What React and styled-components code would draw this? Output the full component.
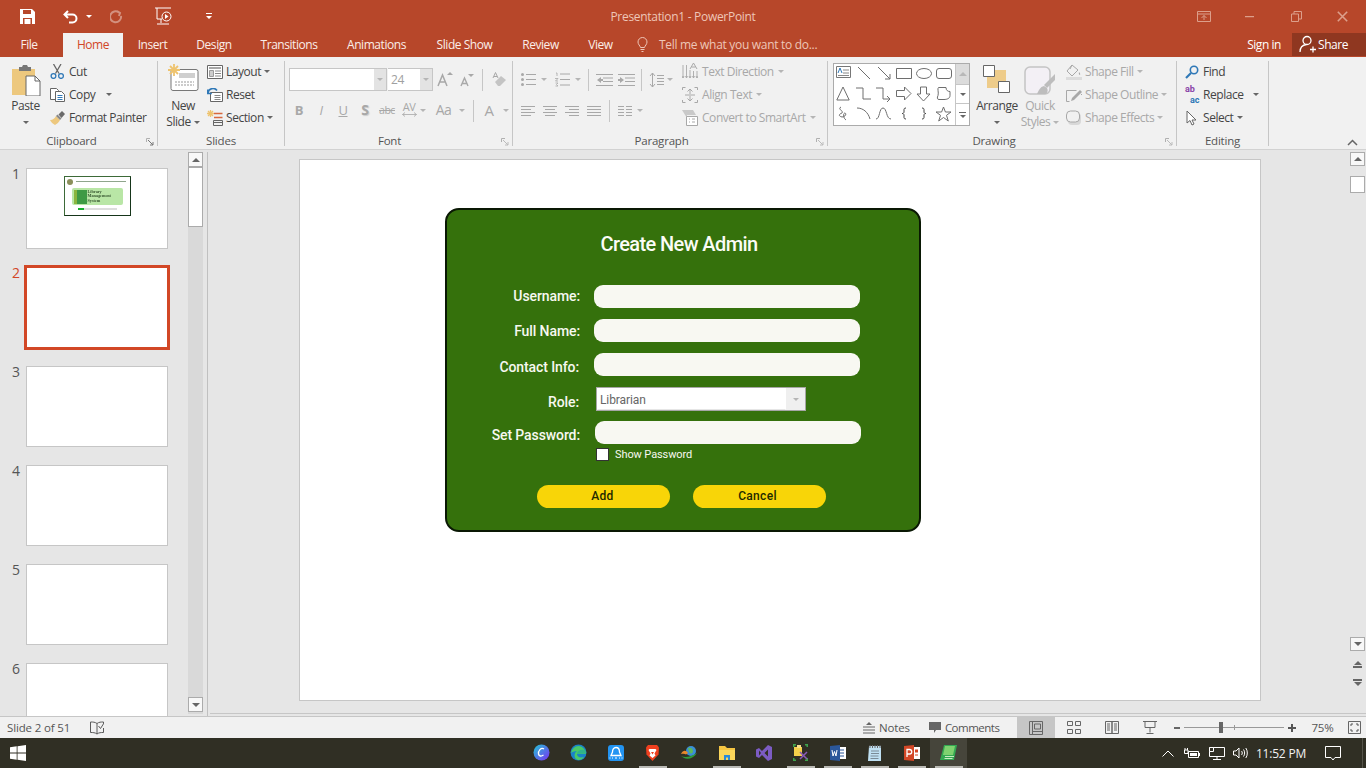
import React from 'react';
import styled, { createGlobalStyle } from 'styled-components';

const Global = createGlobalStyle`
  html, body { margin: 0; padding: 0; background: #e6e6e6; }
  * { box-sizing: border-box; }
  body { font-family: "Open Sans", "Noto Sans", sans-serif; }
`;
const UI = `"Open Sans", "Noto Sans", sans-serif`;
const DIN = `Roboto, "Liberation Sans", sans-serif`;
const GREY = '#a8a8a8';
const DARK = '#444444';
const BLUE = '#2f78b7';
const TAN = '#edc87e';

const Page = styled.div`
  width: 1366px; height: 768px; overflow: hidden;
  display: flex; flex-direction: column;
  font-family: ${UI}; font-size: 12px; letter-spacing: -0.45px; color: ${DARK};
`;

/* ---------- title bar ---------- */
const TitleBar = styled.div`
  height: 33px; background: #b7472a; flex: none;
  display: grid; grid-template-columns: 1fr auto 1fr; align-items: center;
`;
const Qat = styled.div`display: flex; align-items: center; padding-left: 20px;`;
const QatSlot = styled.div`
  width: ${p => p.$w}px; flex: none; display: flex; align-items: center; gap: 8px;
  opacity: ${p => (p.$faded ? 0.4 : 1)};
`;
const TitleText = styled.div`color: #eec6b8; font-size: 12px; padding-bottom: 1px; letter-spacing: -0.3px;`;
const WinControls = styled.div`display: flex; justify-content: flex-end; padding-right: 1px; color: #dc9f8b;`;
const WinBtn = styled.div`width: 46px; height: 30px; display: flex; align-items: center; justify-content: center;`;

/* ---------- tabs ---------- */
const TabBar = styled.div`height: 24px; background: #b7472a; flex: none; display: flex; align-items: stretch;`;
const Tab = styled.div`
  width: ${p => p.$w}px; flex: none; display: flex; align-items: center; justify-content: center;
  color: ${p => (p.$active ? '#d24726' : '#fbeee9')};
  background: ${p => (p.$active ? '#f1f1f1' : 'transparent')};
  font-size: 12px; padding-bottom: 1px;
`;
const TellMe = styled.div`display: flex; align-items: center; gap: 11px; margin-left: 9px; color: #eec6b8; padding-bottom: 1px; font-size: 12px; letter-spacing: -0.3px;`;
const SignIn = styled.div`margin-left: auto; margin-right: 11px; align-self: center; color: #fff; padding-bottom: 1px;`;
const Share = styled.div`
  width: 74px; background: #8f3720; color: #fff; display: flex; align-items: center; gap: 2px;
  padding: 0 0 1px 7px; margin-bottom: 1px;
`;

/* ---------- ribbon ---------- */
const Ribbon = styled.div`
  height: 93px; flex: none; background: #f1f1f1; border-bottom: 1px solid #d2d2d2;
  display: flex; padding-top: 4px; position: relative;
`;
const Group = styled.div`
  width: ${p => p.$w}px; height: 85px; flex: none; border-right: 1px solid #c6c6c6;
  display: flex; flex-direction: column;
`;
const GroupBody = styled.div`height: 71px; flex: none; display: flex; padding-left: ${p => p.$pl}px; gap: ${p => p.$gap || 0}px;`;
const GroupFoot = styled.div`
  height: 16px; flex: none; display: flex; align-items: center; justify-content: center; position: relative;
  font-size: 11.5px; color: #555; letter-spacing: -0.2px; padding-right: ${p => p.$mr || 0}px;
`;
const Launcher = styled.span`
  position: absolute; right: 3px; top: 6px; width: 8px; height: 8px; display: flex;
`;
const Collapse = styled.div`align-self: flex-end; margin-left: auto; margin-right: 8px; margin-bottom: 3px; display: flex;`;

const BigBtn = styled.div`
  width: ${p => p.$w}px; flex: none; display: flex; flex-direction: column; align-items: center;
  color: ${p => (p.$off ? GREY : DARK)}; margin-left: ${p => p.$ml || 0}px;
`;
const BigIcon = styled.div`height: 37px; padding-top: ${p => p.$pt ?? 3}px; display: flex; justify-content: center;`;
const BigLine = styled.div`height: 16px; line-height: 16px; display: flex; align-items: center; gap: 3px; white-space: nowrap;`;
const SmallCol = styled.div`display: flex; flex-direction: column; margin-left: ${p => p.$ml || 0}px;`;
const SmallBtn = styled.div`
  height: 23px; display: flex; align-items: center; gap: ${p => p.$gap ?? 4}px; white-space: nowrap; padding-bottom: 2px;
  color: ${p => (p.$off ? GREY : DARK)};
`;
const IconSlot = styled.span`width: ${p => p.$w || 15}px; flex: none; display: flex; justify-content: center; align-items: center;`;
const Caret = styled.i`
  display: inline-block; width: 0; height: 0; flex: none;
  border-left: 3px solid transparent; border-right: 3px solid transparent;
  border-top: 3px solid ${p => (p.$light ? '#fff' : p.$off ? '#b5b5b5' : '#666')};
  margin-left: ${p => p.$ml || 0}px;
`;
const ToolCol = styled.div`display: flex; flex-direction: column; padding-top: 7px; gap: 8px; width: ${p => (p.$w ? p.$w + 'px' : 'auto')};`;
const ToolRow = styled.div`height: 23px; display: flex; align-items: center;`;
const Tool = styled.div`
  width: ${p => p.$w}px; flex: none; display: flex; align-items: center; justify-content: center;
  flex-direction: ${p => (p.$stack ? 'column' : 'row')};
  margin-left: ${p => p.$ml || 0}px;
  padding-bottom: ${p => (p.$fs ? 2 : 0)}px;
  color: ${GREY}; font-weight: ${p => (p.$b ? 700 : 400)}; font-style: ${p => (p.$i ? 'italic' : 'normal')};
  text-decoration: ${p => (p.$u ? 'underline' : p.$strike ? 'line-through' : 'none')}; font-size: ${p => p.$fs || 12}px;
  line-height: ${p => (p.$stack ? '10px' : 'normal')};
  text-shadow: ${p => (p.$shadow ? '1px 1px 1px #ccc' : 'none')};
`;
const VSep = styled.span`
  width: 1px; height: 22px; background: #c6c6c6; flex: none;
  margin: 0 ${p => p.$m ?? 4}px 0 ${p => p.$ml ?? p.$m ?? 4}px;
`;
const FontName = styled.div`width: 85px; height: 23px; background: #fff; border: 1px solid #c6c6c6; border-right: 0;`;
const FontDrop = styled.div`width: ${p => p.$w}px; height: 23px; background: #e3e3e3; border: 1px solid #c6c6c6; border-left: 0; display: flex; align-items: center; justify-content: center; margin-right: 1px;`;
const FontSize = styled.div`width: 32px; height: 23px; background: #fff; border: 1px solid #c6c6c6; border-right: 0; border-left: 0; color: #a0a0a0; padding-left: 3px; line-height: 21px;`;

const Gallery = styled.div`
  width: 137px; height: 63px; margin-top: 2px; border: 1px solid #ababab; background: #fff;
  display: flex; flex: none;
`;
const GalleryGrid = styled.div`
  width: 122px; display: grid; grid-template-columns: repeat(6, 20px); grid-auto-rows: 20px; align-content: start;
`;
const GalleryCell = styled.div`display: flex; align-items: center; justify-content: center;`;
const GalleryBar = styled.div`width: 14px; border-left: 1px solid #c6c6c6; display: flex; flex-direction: column;`;
const GalleryStep = styled.div`
  height: ${p => p.$h}px; display: flex; align-items: center; justify-content: center; flex-direction: column; gap: 2px;
  background: ${p => (p.$off ? '#dcdcdc' : '#fff')};
  border-bottom: ${p => (p.$last ? 0 : '1px solid #c6c6c6')};
`;
const UpTri = styled.i`width: 0; height: 0; border-left: 4px solid transparent; border-right: 4px solid transparent; border-bottom: 4px solid #b8b8b8;`;

/* ---------- workspace ---------- */
const Work = styled.div`flex: 1; min-height: 0; display: flex; background: #e6e6e6;`;
const Pane = styled.div`width: 188px; flex: none; padding-top: 18px; overflow: hidden; height: 566px;`;
const ThumbRow = styled.div`height: 99px; flex: none; display: flex; padding-left: 12px; gap: 6px;`;
const ThumbNum = styled.div`
  width: 8px; font-size: 14px; line-height: 14px; margin-top: -1px; letter-spacing: 0;
  color: ${p => (p.$sel ? '#d24726' : '#555')};
`;
const Thumb = styled.div`
  width: ${p => (p.$sel ? 146 : 142)}px; height: ${p => (p.$sel ? 85 : 81)}px; flex: none; background: #fff;
  border: ${p => (p.$sel ? '3px solid #d24726' : '1px solid #c6c6c6')};
  margin: ${p => (p.$sel ? '-2px 0 0 -2px' : 0)};
  display: flex; justify-content: center; align-items: flex-start;
`;
const Mini = styled.div`
  width: 67px; height: 40px; margin-top: 7px; border: 1.5px solid #3d6a38; border-right-color: #16351a; border-bottom-color: #16351a;
  background: #fff; display: flex; flex-direction: column; align-items: center; filter: blur(0.35px);
`;
const MiniHead = styled.div`width: 100%; display: flex; align-items: center; gap: 3px; padding: 1px 2px; height: 9px;`;
const MiniSeal = styled.span`width: 6px; height: 6px; border-radius: 50%; background: #8a8f5a;`;
const MiniHeadLine = styled.span`width: 50px; height: 1px; background: #8fa58c;`;
const MiniCard = styled.div`width: 51px; height: 17px; background: #b9e6a6; border-radius: 2px; display: flex; align-items: center; padding-left: 2px; gap: 1px; margin-top: 2px;`;
const MiniBook = styled.span`width: 13px; height: 14px; background: #3f9a45; border-left: 3px solid #8ab53f; flex: none;`;
const MiniTitle = styled.span`font: 700 4.2px/4.6px "Liberation Serif", serif; color: #35552f; letter-spacing: 0;`;
const MiniTrack = styled.div`width: 39px; height: 2px; background: #ddd; margin-top: 3px; display: flex;`;
const MiniFill = styled.span`width: 6px; background: #17b02c;`;

const VScroll = styled.div`
  width: 15px; flex: none; height: 562px; margin-top: 2px; background: #d9d9d9; display: flex; flex-direction: column;
`;
const ScrollBtn = styled.div`
  width: 15px; height: ${p => p.$h || 15}px; flex: none; background: ${p => (p.$thumb ? '#fff' : '#f8f8f8')}; border: 1px solid #ababab;
  display: flex; align-items: center; justify-content: center;
  margin-top: ${p => (p.$auto ? 'auto' : (p.$mt || 0) + 'px')};
  margin-bottom: ${p => p.$mb || 0}px;
`;
const Tri = styled.i`
  width: 0; height: 0; border-left: 4px solid transparent; border-right: 4px solid transparent;
  ${p => (p.$down ? 'border-top: 4px solid #666;' : 'border-bottom: 4px solid #666;')}
`;
const Divider = styled.div`width: 1px; height: 564px; margin: 2px 0 0 4px; background: #c0c0c0; flex: none;`;
const Editor = styled.div`
  flex: 1; min-width: 0; height: 566px; display: flex; flex-direction: column;
`;
const EditorTop = styled.div`height: 563px; flex: none; display: flex;`;
const Canvas = styled.div`flex: 1; min-width: 0; padding: 9px 0 0 91px;`;
const Slide = styled.div`
  width: 962px; height: 542px; background: #fff; border: 1px solid #c6c6c6; padding: 48px 0 0 145px;
`;
const RightBar = styled.div`width: 15px; flex: none; margin-right: 1px; display: flex; flex-direction: column; padding-top: 2px; align-items: center; height: 563px;`;
const NavStep = styled.div`height: 18px; width: 15px; flex: none; display: flex; flex-direction: column; align-items: center; justify-content: center; gap: 1px; margin-bottom: ${p => p.$mb || 0}px;`;
const NavBar = styled.i`width: ${p => p.$w || 9}px; height: ${p => p.$h || 2}px; background: #666;`;
const BottomLine = styled.div`height: 1px; background: #c6c6c6; margin-left: 2px; flex: none;`;

/* ---------- form in the slide ---------- */
const Panel = styled.div`
  width: 476px; height: 324px; background: #35710c; border: 2px solid #0a1804; border-radius: 14px;
  font-family: ${DIN}; letter-spacing: 0; color: #f7f8f0;
  display: flex; flex-direction: column; padding-top: 20px;
`;
const PanelTitle = styled.h1`
  margin: 0 0 27px; height: 28px; font: 500 20px/28px ${DIN}; text-align: center; padding-right: 8px; color: #fbfcf6; letter-spacing: -0.6px;
`;
const FieldRow = styled.div`display: flex; align-items: center; height: ${p => p.$h || 23}px; margin-bottom: ${p => p.$mb ?? 11}px;`;
const FieldLabel = styled.label`
  width: ${p => p.$w || 133}px; flex: none; text-align: right; font-size: 14px; font-weight: 500; line-height: 18px;
  position: relative; top: ${p => p.$dy || 0}px; letter-spacing: -0.1px;
`;
const FieldBox = styled.div`width: 266px; height: 23px; background: #f8f8f2; border-radius: 9px; margin-left: ${p => p.$ml ?? 14}px;`;
const SelectBox = styled.div`
  width: 210px; height: 24px; margin-left: 17px; background: #fff; border: 1px solid #a6a6a6;
  display: flex; align-items: stretch; font-size: 12px; color: #666; line-height: 22px; letter-spacing: -0.1px;
`;
const SelectValue = styled.div`flex: 1; padding-left: 2px; border: 1px solid #fff; border-bottom-color: #e6e6e6;`;
const SelectDrop = styled.div`width: 19px; background: #efefef; display: flex; align-items: center; justify-content: center;`;
const CheckRow = styled.div`display: flex; align-items: center; gap: 6px; height: 13px; margin: -7px 0 0 149px; font-size: 11px; letter-spacing: -0.1px;`;
const CheckBox = styled.span`width: 13px; height: 13px; background: #fff; border: 1px solid #333; flex: none;`;
const ButtonRow = styled.div`display: flex; gap: 23px; margin: 24px 0 0 90px;`;
const Pill = styled.div`
  width: 133px; height: 23px; border-radius: 12px; background: #f8d508; color: #1f2a00;
  font: 500 12px/22px ${DIN}; text-align: center; padding-right: ${p => p.$pr || 0}px; letter-spacing: 0.3px;
`;

/* ---------- status bar ---------- */
const Status = styled.div`
  height: 22px; flex: none; background: #f1f1f1; border-top: 1px solid #c6c6c6; display: flex; align-items: center;
  font-size: 11.5px; color: #555; letter-spacing: -0.15px;
`;
const StatusText = styled.span`margin-left: 7px; width: 83px; flex: none;`;
const StatusItem = styled.div`
  display: flex; align-items: center; gap: 4px; margin-left: ${p => p.$ml || 0}px; flex: none;
  letter-spacing: ${p => p.$ls ?? -0.15}px;
`;
const ViewBtn = styled.div`
  width: 38px; height: 21px; display: flex; align-items: center; justify-content: center; flex: none;
  background: ${p => (p.$on ? '#c6c6c6' : 'transparent')}; margin-left: ${p => p.$ml || 0}px;
`;
const Zoom = styled.div`display: flex; align-items: center; margin-left: ${p => p.$ml || 0}px; flex: none;`;
const ZoomTrack = styled.div`width: 100px; height: 1px; background: #999; margin: 0 4px 0 4px; display: flex; align-items: center; padding-left: 35px;`;
const ZoomThumb = styled.span`width: 4px; height: 11px; background: #666; flex: none;`;
const ZoomTick = styled.span`width: 1px; height: 5px; background: #999; margin-left: 11px; flex: none;`;
const ZoomMinus = styled.span`width: 6px; height: 2px; background: #666; flex: none;`;
const ZoomPlus = styled.span`width: 8px; height: 2px; background: #555; position: relative; flex: none;
  &::after { content: ''; position: absolute; left: 3px; top: -3px; width: 2px; height: 8px; background: #555; }
`;

/* ---------- taskbar ---------- */
const Taskbar = styled.div`
  height: 30px; flex: none; background: #302f24; display: flex; align-items: center; color: #fff;
`;
const StartSlot = styled.div`width: 36px; flex: none; display: flex; justify-content: center;`;
const Apps = styled.div`display: flex; margin-left: 487px; height: 30px; flex: none;`;
const AppSlot = styled.div`
  width: 37px; height: 30px; flex: none; display: flex; align-items: center; justify-content: center;
  background-color: ${p => (p.$on ? '#46453b' : 'transparent')};
  background-image: ${p => (p.$run ? 'linear-gradient(#b9b9b4, #b9b9b4)' : 'none')};
  background-size: 28px 2px; background-repeat: no-repeat; background-position: center bottom;
  padding-bottom: 1px;
`;
const Tray = styled.div`margin-left: auto; display: flex; align-items: center; height: 30px; padding-right: 3px;`;
const TraySlot = styled.div`width: ${p => p.$w}px; flex: none; display: flex; justify-content: center;`;
const Clock = styled.div`width: 56px; flex: none; font-size: 12px; color: #f2f2f2; letter-spacing: -0.2px; text-align: center;`;
const TrayEdge = styled.span`width: 1px; height: 30px; background: #55544a; flex: none; margin-left: 5px;`;

/* ---------- icons ---------- */
const S = ({ w = 16, h = 16, vb, children, ...r }) => (
  <svg width={w} height={h} viewBox={vb || `0 0 ${w} ${h}`} fill="none" style={{ flex: 'none' }} {...r}>{children}</svg>
);
const SaveIco = () => <S w={15} h={15}><path d="M0 0h12l3 3v12H0z" fill="#fff"/><path d="M3 1h8v4H3z" fill="#b7472a"/><path d="M3 9h9v6H3z" fill="#b7472a"/><path d="M4.500 10h6v5h-6z" fill="#fff"/></S>;
const UndoIco = () => <S w={15} h={14}><path d="M5 1 1.500 4.500 5 8M2 4.500h7.500a4 4 0 0 1 0 8H6" stroke="#fff" strokeWidth="2"/></S>;
const RedoIco = () => <S w={13} h={14}><path d="M9 2.500a5.500 5.500 0 1 0 2 3.500M7 1l3 2-1 3" stroke="#fff" strokeWidth="2"/></S>;
const PresentIco = () => <S w={17} h={19}><path d="M0 1h16M2 1v11h5M6 12v4M2 17h12" stroke="#fff"/><circle cx="11.500" cy="9.500" r="4.500" stroke="#fff"/><path d="M10 7l3.500 2.500L10 12z" fill="#fff"/></S>;
const CustomIco = () => <S w={6} h={7}><path d="M0 0h6v1H0z M0 3h6L3 6z" fill="#fff"/></S>;
const RibbonDisplay = () => <S w={14} h={11}><path d="M.5.5h13v10H.5zM.5 3h13" stroke="currentColor"/><path d="M7 9V4.500M4.500 7 7 4.500 9.500 7" stroke="currentColor"/></S>;
const MinIco = () => <S w={10} h={2}><path d="M0 .5h9" stroke="currentColor" strokeWidth="1.500"/></S>;
const RestoreIco = () => <S w={11} h={11}><path d="M.5 3h7v7.500h-7zM3 3V.5h7.500V8H8" stroke="currentColor"/></S>;
const CloseIco = () => <S w={11} h={11}><path d="M.8.8l9.400 9.400M10.200.8.8 10.200" stroke="currentColor" strokeWidth="1.600"/></S>;
const BulbIco = () => <S w={11} h={15}><path d="M3.500 10.500C3 8.500 1 7.500 1 5a4.500 4.500 0 0 1 9 0c0 2.500-2 3.500-2.500 5.500zM3.500 12.500h4M4.500 14.500h2" stroke="#eec6b8"/></S>;
const ShareIco = () => <S w={17} h={18}><circle cx="8" cy="5.500" r="4" stroke="#fff" strokeWidth="1.300"/><path d="M1 17c0-4 2.500-7 6.500-7.500M11 14.500h6M14 11.500v6" stroke="#fff" strokeWidth="1.300"/></S>;

const PasteIco = () => <S w={30} h={32}><path d="M1 5h23v26H1z" fill={TAN}/><path d="M8 3h3l1-2h4l1 2h3v4H8z" fill="#777"/><path d="M15 12h9l5 5v15H15z" fill="#fff" stroke="#666"/><path d="M24 12v5h5" stroke="#666"/></S>;
const CutIco = () => <S w={15} h={15}><path d="M3.500 0 9 9.500M11 0 5.500 9.500" stroke="#666" strokeWidth="1.300"/><circle cx="3.500" cy="12" r="2.400" stroke={BLUE} strokeWidth="1.300"/><circle cx="11" cy="12" r="2.400" stroke={BLUE} strokeWidth="1.300"/></S>;
const CopyIco = () => <S w={15} h={14}><path d="M.5.5h6l2 2v9h-8z" fill="#fff" stroke="#666"/><path d="M5.500 3.500h6l3 3v7h-9z" fill="#fff" stroke="#666"/><path d="M7.500 7.500h5M7.500 9.500h5M7.500 11.500h5" stroke={BLUE}/></S>;
const PainterIco = () => <S w={16} h={14}><path d="M0 9c3 0 5-2 6-4l4 4c-1 2-3 4-5 5-2-1-4-3-5-5z" fill={TAN}/><path d="M6 5l4 4 1.500-1.500-4-4z" fill="#888"/><path d="M8.500 3.500 12 0l3 3-3.500 4z" fill="#6a6a6a"/></S>;
const NewSlideIco = () => <S w={31} h={27}><rect x="3" y="5.500" width="27" height="21" rx="2" fill="#fff" stroke="#777"/><path d="M11 9h16v5H11z" fill="#cfcfcf"/><path d="M7 18h19M7 21h19" stroke="#999" strokeDasharray="2 1"/><path d="M6 0v12M0 6h12M2 2l8 8M10 2l-8 8" stroke="#eec36e" strokeWidth="1.800"/></S>;
const LayoutIco = () => <S w={16} h={14}><path d="M.5.5h15v13H.5z" fill="#fff" stroke="#666"/><path d="M2 3h12" stroke="#888" strokeWidth="1.500"/><path d="M2.500 5.500h4v6h-4z" fill="#ccc" stroke="#999"/><path d="M8 6h6M8 8.500h6M8 11h6" stroke="#888"/></S>;
const ResetIco = () => <S w={16} h={14}><path d="M3.500 4.500h12v9h-12z" fill="#fff" stroke="#666"/><path d="M7.500 7.500h6M7.500 9.500h6M7.500 11.500h6" stroke="#888"/><path d="M1 5a5 5 0 0 1 9-2.500M.8 1.500V5.500h4" stroke={BLUE} strokeWidth="1.600"/></S>;
const SectionIco = () => <S w={16} h={16}><path d="M3.500 0v7M0 3.500h7M1 1l5 5M6 1 1 6" stroke="#eec36e" strokeWidth="1.300"/><path d="M7 3.500h8.500M7 7.500h8.500" stroke="#d8683d" strokeWidth="1.300"/><path d="M6.500 10.500h9v5h-9z" stroke="#666"/><path d="M6.500 12.500h9" stroke="#666"/></S>;
const LauncherIco = ({ c = '#888' }) => <S w={8} h={8}><path d="M.5 4V.5H4" stroke="#b0b0b0"/><path d="M2 2l5 5M4 7h3V4" stroke={c}/></S>;

const Grow = () => <S w={16} h={15}><path d="M1 14 5.500 3 10 14M3 10h5" stroke={GREY} strokeWidth="1.500"/><path d="M10 3l3-3 3 3z" fill={GREY}/></S>;
const Shrink = () => <S w={14} h={15}><path d="M1 14 4.500 6 8 14M2.500 11.500h4" stroke={GREY} strokeWidth="1.400"/><path d="M8 2h6l-3 3z" fill={GREY}/></S>;
const Eraser = () => <S w={15} h={15}><path d="M1 6 3.500.5 6 6M2 4.500h3" stroke={GREY}/><path d="M3 10l6-6 5 4-6 6H6z" fill="#c4c4c4"/></S>;
const KernArrow = () => <S w={15} h={5}><path d="M.5 2.500h14M3 .5l-2.500 2 2.500 2M12 .5l2.500 2-2.500 2" stroke={GREY} strokeWidth=".8"/></S>;
const Bullets = () => <S w={15} h={13}><g fill={GREY}><circle cx="1.500" cy="1.500" r="1.500"/><circle cx="1.500" cy="6.500" r="1.500"/><circle cx="1.500" cy="11.500" r="1.500"/></g><path d="M5 1.500h10M5 6.500h10M5 11.500h10" stroke={GREY}/></S>;
const Numbers = () => <S w={15} h={15}><path d="M1 1h1v3M0 6.500h3L.5 9h2.500M.5 11h2.500L1.500 12.500 3 14H.5" stroke={GREY} strokeWidth=".8"/><path d="M5 2h10M5 7.500h10M5 13h10" stroke={GREY}/></S>;
const Indent = ({ rev }) => <S w={17} h={12}><path d="M0 .5h17M7 4h10M7 7.500h10M0 11.500h17" stroke={GREY}/><path d={rev ? 'M1 6l4-3v2h2v2H5v2z' : 'M6 6 2 3v2H0v2h2v2z'} fill={GREY}/></S>;
const LineSp = () => <S w={15} h={16}><path d="M3.500 1v14M1 4l2.500-3L6 4M1 12l2.500 3L6 12" stroke={GREY}/><path d="M8 3.500h7M8 6.500h7M8 9.500h7M8 12.500h7" stroke={GREY}/></S>;
const Align = ({ t }) => {
  const paths = {
    l: 'M0 .5h14M0 3.500h10M0 6.500h14M0 9.500h10',
    c: 'M0 .5h14M2 3.500h10M0 6.500h14M2 9.500h10',
    r: 'M0 .5h14M4 3.500h10M0 6.500h14M4 9.500h10',
    j: 'M0 .5h14M0 3.500h14M0 6.500h14M0 9.500h14',
  };
  return <S w={14} h={10}><path d={paths[t]} stroke={GREY}/></S>;
};
const Cols = () => <S w={14} h={10}><path d="M0 .5h6M8 .5h6M0 3.500h6M8 3.500h6M0 6.500h6M8 6.500h6M0 9.500h6M8 9.500h6" stroke={GREY}/></S>;
const TextDir = () => <S w={16} h={17}><path d="M1 2v13M4.500 2v13M8 7v8M11.500 8v7M15 8v7M0 13l1 2 1-2M3.500 13l1 2 1-2M7 13l1 2 1-2M10.500 13l1 2 1-2M14 13l1 2 1-2" stroke={GREY} strokeWidth=".9"/><path d="M8 6l3.500-6L15 6M9.500 4h4" stroke={GREY}/></S>;
const AlignText = () => <S w={16} h={16}><path d="M.5 3V.5h3M12.500.5h3V3M.5 13v2.500h3M12.500 15.500h3V13" stroke={GREY}/><path d="M8 2v5M5.500 4.500 8 2l2.500 2.500M8 14V9M5.500 11.500 8 14l2.500-2.500M3 8h10" stroke={GREY}/></S>;
const Smart = () => <S w={16} h={16}><path d="M0 0h11l3 5H5v3z" fill="#c9c9c9"/><path d="M4.500 6.500h11v9h-11z" fill="#fff" stroke={GREY}/><path d="M7 9h1M10 9h3M7 12h1M10 12h3" stroke={GREY}/></S>;

const ShapeIco = ({ n }) => {
  const c = '#6e6e6e';
  const m = {
    text: <><path d="M.5.5h14v11H.5z" fill="#fff" stroke="#777"/><path d="M2 7l2-5 2 5" stroke={BLUE}/><path d="M7 4h6M7 7h6M2 9.500h11" stroke="#888"/></>,
    line: <path d="M2 1l12 12" stroke={c}/>,
    arrow: <path d="M2 1l12 12M14 8v5H9" stroke={c}/>,
    rect: <path d="M.5 2.500h15v10H.5z" stroke={c}/>,
    oval: <ellipse cx="8" cy="7.500" rx="7.500" ry="5" stroke={c}/>,
    round: <rect x=".5" y="2.500" width="15" height="10" rx="2.500" stroke={c}/>,
    tri: <path d="M7 1 .8 14h12.400z" stroke={c}/>,
    elbow: <path d="M0 2h7v11h8" stroke={c}/>,
    elbowA: <path d="M0 2h7v11h7M11 10l3 3-3 3" stroke={c}/>,
    rarrow: <path d="M.5 4.500h8V1l6.500 6.500L8.500 14v-3.500h-8z" stroke={c}/>,
    darrow: <path d="M4.500 1v7H1l6.500 7L14 8h-3.500V1z" stroke={c}/>,
    snip: <path d="M2.500 1.500H10c0 3 2 4 4 4v4c0 3-3 4-6 4H3c-2 0-2-2-1-4 1-3-1-7 .5-8z" stroke={c}/>,
    free: <path d="M5 1c-4 2 3 4 1 6-3 1-4 3 0 4 3 0 5-3 3-4-2 0-2 5 1 7" stroke={c}/>,
    arc: <path d="M1 2c6 0 11 4 13 11" stroke={c}/>,
    curve: <path d="M0 13c4 0 3-11 7-11s3 11 8 11" stroke={c}/>,
    lb: <path d="M10 2C8 2 8 3 8 4v2c0 1-1 1.500-2 1.500 1 0 2 .5 2 1.500v2c0 1 0 2 2 2" stroke="#444"/>,
    rb: <path d="M6 2c2 0 2 1 2 2v2c0 1 1 1.500 2 1.500-1 0-2 .5-2 1.500v2c0 1 0 2-2 2" stroke="#444"/>,
    star: <path d="M7.500 1 9.400 6H15l-4.500 3.300L12.300 15l-4.800-3.500L2.700 15l1.800-5.700L0 6h5.600z" stroke={c}/>,
  };
  return <S w={16} h={16}>{m[n]}</S>;
};
const ArrangeIco = () => <S w={28} h={28}><path d="M8 5h15v18H4V9z" fill={TAN} opacity=".9"/><path d="M.5.5h11v11H.5z" fill="#fff" stroke="#666"/><path d="M15.500 16.500h11v11h-11z" fill="#fff" stroke="#666"/></S>;
const QuickIco = () => <S w={32} h={30}><rect x="1" y="1" width="25" height="27" rx="5" fill="#f3f0f5" stroke="#c4c4c4" strokeWidth="1.500"/><path d="M31 8 20 19l3 3L31 14z" fill="#bdbdbd"/><path d="M20 20c-4 1-5 4-7 8h9c2-2 2-4 1-6z" fill="#bdbdbd"/></S>;
const FillIco = () => <S w={16} h={16}><path d="M6 1 1 7l5 5 6-6z" stroke={GREY}/><path d="M6 1 4 5" stroke={GREY}/><path d="M13 8c1 1 1.500 2 1 3-1 0-1.500-2-1-3z" fill={GREY}/><path d="M0 13h16v3H0z" fill="#dcdcdc"/></S>;
const OutlineIco = () => <S w={16} h={16}><path d="M.5 3.500h10M.5 3.500v11h3M15.500 7v1" stroke={GREY}/><path d="M6 11l-1 3 3-1 8-8-2-2z" fill={GREY}/></S>;
const EffectsIco = () => <S w={16} h={16}><rect x="2" y="3" width="13" height="12" rx="4" fill="#d8d8d8"/><rect x="0.500" y="1" width="13" height="11" rx="4" fill="#f1f1f1" stroke={GREY}/></S>;
const FindIco = () => <S w={14} h={14}><circle cx="9" cy="5" r="3.700" stroke={BLUE} strokeWidth="1.600"/><path d="M6 8 1 13" stroke={BLUE} strokeWidth="2.200"/></S>;
const SelectIco = () => <S w={13} h={16}><path d="M1 1v12l3-2.500L6 15l2-1-2-4h4z" fill="#fff" stroke="#666"/></S>;
const ReplaceMark = styled.span`
  width: 16px; flex: none; font: 700 9px/11px ${DIN}; display: flex; flex-direction: column; letter-spacing: 0;
`;
const Ra = styled.span`display: block; height: 11px; color: #8a45a8;`;
const Rb = styled.span`display: block; height: 11px; color: ${BLUE}; padding-left: 5px;`;
const ChevUp = () => <S w={11} h={7}><path d="M1 6l4.500-4.500L10 6" stroke="#666" strokeWidth="1.500"/></S>;

const SpellIco = () => <S w={14} h={14}><path d="M7 2.500C5 1 3 1 .5 1v10.500c2.500 0 4.500 0 6.500 1.500M7 2.500V13M7 13c2-1.500 4-1.500 6.500-1.500V7M13.500 2.500V1C11 1 9 1 7 2.500" stroke="#5a5a5a"/><path d="M8.500 5l2 2.500L14 2" stroke="#5a5a5a"/></S>;
const NotesIco = () => <S w={12} h={12}><path d="M6 0 3 3h6z" fill="#666"/><path d="M0 5h12M0 8h12M0 11h12" stroke="#666"/></S>;
const CommentIco = () => <S w={12} h={12}><path d="M0 0h12v8H7L5 11V8H0z" fill="#666"/></S>;
const NormalV = () => <S w={14} h={14}><path d="M.5.5h13v13H.5zM3.500.5v13M3.500 10.500h10M5.500 3h6v5h-6z" stroke="#666"/></S>;
const SorterV = () => <S w={14} h={13}><path d="M.5.5h5v4h-5zM8.500.5h5v4h-5zM.5 8.500h5v4h-5zM8.500 8.500h5v4h-5z" stroke="#666"/></S>;
const ReadV = () => <S w={14} h={13}><path d="M.5.5H7v12H.5zM7 .5h6.500v12H7zM2 3h3M2 5h3M2 7h3M2 9h3M9 3h3M9 5h3M9 7h3M9 9h3" stroke="#666"/></S>;
const ShowV = () => <S w={14} h={13}><path d="M0 .5h14M2 .5v6h10v-6M7 6.500v5M3.500 12.500h7" stroke="#666"/></S>;
const FitIco = () => <S w={13} h={13}><path d="M.5.5h12v12H.5z" stroke="#666"/><path d="M4 4H2M4 4V2M9 4h2M9 4V2M4 9H2M4 9v2M9 9h2M9 9v2" stroke="#555"/></S>;

const WinIco = () => <S w={16} h={16}><path d="M0 2.300 6.700 1.300v6.300H0zM7.500 1.200 16 0v7.600H7.500zM0 8.400h6.700v6.300L0 13.700zM7.500 8.400H16V16l-8.500-1.200z" fill="#fff"/></S>;
const CanvaI = () => <S w={17} h={17}><defs><linearGradient id="cg" x1="0" y1="0" x2="1" y2="1"><stop offset="0" stopColor="#22c7d6"/><stop offset="1" stopColor="#7b2ff2"/></linearGradient></defs><circle cx="8.500" cy="8.500" r="8" fill="url(#cg)"/><path d="M11 5c-3-2-6 2-5.500 5 .5 2.500 3 2.500 5 1" stroke="#fff" strokeWidth="1.300"/></S>;
const EdgeI = () => <S w={17} h={17}><circle cx="8.500" cy="8.500" r="8" fill="#1a83c8"/><path d="M1 9c1-5 6-9 11-6 3 2 4 5 4 7H7c0 3 3 4 7 3-2 3-6 4-8 2C4 13 4 9 7 7c-3 0-5 1-6 2z" fill="#49c96a"/><path d="M7 9.800h9c0-1-.1-2-.5-3C13 5 8 5 7 9.800z" fill="#2fb48b"/></S>;
const BellI = () => <S w={16} h={16}><rect width="16" height="16" rx="3" fill="#2294f2"/><path d="M8 2.500c2.500 0 3.500 2 3.500 4.500l1.500 3.500H3L4.500 7C4.500 4.500 5.500 2.500 8 2.500z" stroke="#fff" strokeWidth="1.300"/><path d="M1.500 13h1M4 13h1M7 13h2M11 13h1M13.500 13h1" stroke="#fff"/></S>;
const BraveI = () => <S w={15} h={17}><path d="M3 1h9l2 2.500-.5 7L7.500 17 1.500 10.500 1 3.500z" fill="#f0401f"/><path d="M4.500 5h6l1 1-2 3.500 1 2-3 2.500-3-2.500 1-2L3.500 6z" fill="#fff"/><path d="M6 8h3L7.500 10.500z" fill="#f0401f"/></S>;
const IdmI = () => <S w={17} h={16}><circle cx="10" cy="6" r="5" fill="#3a8fd6"/><path d="M7 3c2-1 5 0 5 3s-3 3-4 1z" fill="#5cb85c"/><path d="M0 9c2-4 5-4 7-1l-2 1.500c-1-1-3-1-5-.5z" fill="#e8892b"/><path d="M0 11c4 2 10 1 16-3-3 5-9 7-13 5z" fill="#2e9e3a"/></S>;
const FolderI = () => <S w={16} h={14}><path d="M0 0h6l2 2h8v3H0z" fill="#f4c542"/><path d="M0 4h16v10H0z" fill="#fbd75b"/><path d="M5 9h6v5H9v-2.500H7V14H5z" fill="#2c8bd8"/></S>;
const VsI = () => <S w={16} h={16}><path d="M12 0l4 2v12l-4 2-6-6-3 3-3-1.500v-7L3 3l3 3zM3 5.500v5L5 8zM12 4.500 8.500 8l3.500 3.500z" fill="#7c5cc4"/></S>;
const BoxI = () => <S w={17} h={17}><path d="M1 0h3v1.500H2.500V3H1zM13 0h3v3h-1.500V1.500H13zM1 14h1.500v1.500H4V17H1zM14.500 14H16v3h-3v-1.500h1.500z" fill="#3fa34d"/><path d="M2 3h8v9H2z" fill="#f4cf4a"/><path d="M5 1h4v3H5z" fill="#f7e08a"/><path d="M8 8l7 7M15 8l-7 7" stroke="#8a5ab8" strokeWidth="1.500"/></S>;
const WordI = () => <S w={16} h={16}><path d="M8 2h8v12H8z" fill="#fff"/><path d="M10 5h4M10 8h4M10 11h4" stroke="#2b579a"/><path d="M0 1l10-1v16L0 15z" fill="#2b579a"/><path d="M2 5l1 6 1.500-4.500L6 11l1-6" stroke="#fff"/></S>;
const NoteI = () => <S w={16} h={16}><path d="M2 1h12v15H1z" fill="#bfe0f2"/><path d="M3 0v3M5.500 0v3M8 0v3M10.500 0v3M13 0v3" stroke="#666"/><path d="M4 6h8M4 8.500h8M3.500 11h8M3.500 13.500h8" stroke="#7a8b96"/></S>;
const PptI = () => <S w={16} h={16}><path d="M8 2h8v12H8z" fill="#fff"/><path d="M0 1l10-1v16L0 15z" fill="#d24726"/><path d="M3 12V4.500h2.500a2 2 0 0 1 0 4.500H3" stroke="#fff" strokeWidth="1.300"/><path d="M11 4.500h3v3h-3z" fill="#d24726"/><path d="M11 10h3" stroke="#d24726"/></S>;
const BookI = () => <S w={17} h={16}><path d="M4 0h13l-3 15H0z" fill="#33a852"/><path d="M5 1h10l-2 9H3z" fill="#7ed26f"/><path d="M5 11.500h9M4.500 13.500h8" stroke="#c8ecc0"/></S>;

const ChevTray = () => <S w={12} h={7}><path d="M.5 6.500 6 1l5.500 5.500" stroke="#fff"/></S>;
const Battery = () => <S w={16} h={11}><path d="M4.500 3.500h10v6h-10z" stroke="#fff"/><path d="M6 5h7v3H6zM15 5h1v3h-1z" fill="#fff"/><path d="M1 0v2M3.500 0v2M.5 2h3.500v3.500H.5z" stroke="#fff"/></S>;
const Network = () => <S w={16} h={13}><path d="M.5.5h15v9H.5zM8 9.500v3M4 12.500h8" stroke="#fff"/><path d="M.5.5h4v4h-4z" stroke="#fff" fill="#302f24"/></S>;
const Speaker = () => <S w={16} h={12}><path d="M.5 4h2.500L6 1v10L3 8H.5zM8.500 4c1 1 1 3 0 4M10.500 2.500c1.500 2 1.500 5 0 7M12.800 1c2 2.500 2 7.500 0 10" stroke="#fff"/></S>;
const Notify = () => <S w={16} h={15}><path d="M.5.5h15v11H10l-2 2.500L6 11.500H.5z" stroke="#fff"/></S>;

/* ---------- data-driven bits ---------- */
const TABS = [['Insert', 59], ['Design', 64], ['Transitions', 86], ['Animations', 89], ['Slide Show', 87], ['Review', 65], ['View', 55]];
const SHAPES = ['text','line','arrow','rect','oval','round','tri','elbow','elbowA','rarrow','darrow','snip','free','arc','curve','lb','rb','star'];
const APPS = [
  [CanvaI], [EdgeI], [BellI], [BraveI, true], [IdmI], [FolderI, true], [VsI], [BoxI, true], [WordI, true], [NoteI, true], [PptI, true], [BookI, true, true],
];

const MiniThumb = () => (
  <Mini>
    <MiniHead><MiniSeal /><MiniHeadLine /></MiniHead>
    <MiniCard><MiniBook /><MiniTitle>Library<br />Management<br />System</MiniTitle></MiniCard>
    <MiniTrack><MiniFill /></MiniTrack>
  </Mini>
);

export default function App() {
  return (
    <Page>
      <Global />
      <TitleBar>
        <Qat>
          <QatSlot $w={43}><SaveIco /></QatSlot>
          <QatSlot $w={47}><UndoIco /><Caret $light /></QatSlot>
          <QatSlot $w={45} $faded><RedoIco /></QatSlot>
          <QatSlot $w={51}><PresentIco /></QatSlot>
          <QatSlot $w={10}><CustomIco /></QatSlot>
        </Qat>
        <TitleText>Presentation1 - PowerPoint</TitleText>
        <WinControls>
          <WinBtn><RibbonDisplay /></WinBtn>
          <WinBtn><MinIco /></WinBtn>
          <WinBtn><RestoreIco /></WinBtn>
          <WinBtn><CloseIco /></WinBtn>
        </WinControls>
      </TitleBar>

      <TabBar>
        <Tab $w={58}>File</Tab>
        <Tab $w={5} />
        <Tab $w={60} $active>Home</Tab>
        {TABS.map(([t, w]) => <Tab key={t} $w={w}>{t}</Tab>)}
        <TellMe><BulbIco />Tell me what you want to do...</TellMe>
        <SignIn>Sign in</SignIn>
        <Share><ShareIco />Share</Share>
      </TabBar>

      <Ribbon>
        <Group $w={158}>
          <GroupBody $pl={8}>
            <BigBtn $w={35}>
              <BigIcon><PasteIco /></BigIcon>
              <BigLine>Paste</BigLine>
              <BigLine><Caret /></BigLine>
            </BigBtn>
            <SmallCol $ml={7}>
              <SmallBtn><IconSlot><CutIco /></IconSlot>Cut</SmallBtn>
              <SmallBtn><IconSlot><CopyIco /></IconSlot>Copy<Caret $ml={7} /></SmallBtn>
              <SmallBtn><IconSlot><PainterIco /></IconSlot>Format Painter</SmallBtn>
            </SmallCol>
          </GroupBody>
          <GroupFoot $mr={14}>Clipboard<Launcher><LauncherIco c="#777" /></Launcher></GroupFoot>
        </Group>

        <Group $w={127}>
          <GroupBody $pl={8}>
            <BigBtn $w={34}>
              <BigIcon $pt={3}><NewSlideIco /></BigIcon>
              <BigLine>New</BigLine>
              <BigLine>Slide<Caret /></BigLine>
            </BigBtn>
            <SmallCol $ml={7}>
              <SmallBtn $gap={3}><IconSlot $w={16}><LayoutIco /></IconSlot>Layout<Caret /></SmallBtn>
              <SmallBtn $gap={3}><IconSlot $w={16}><ResetIco /></IconSlot>Reset</SmallBtn>
              <SmallBtn $gap={3}><IconSlot $w={16}><SectionIco /></IconSlot>Section<Caret /></SmallBtn>
            </SmallCol>
          </GroupBody>
          <GroupFoot>Slides</GroupFoot>
        </Group>

        <Group $w={228}>
          <GroupBody $pl={4}>
            <ToolCol>
              <ToolRow>
                <FontName /><FontDrop $w={13}><Caret $off /></FontDrop>
                <FontSize>24</FontSize><FontDrop $w={13}><Caret $off /></FontDrop>
                <Tool $w={22}><Grow /></Tool><Tool $w={22}><Shrink /></Tool>
                <VSep $m={4} />
                <Tool $w={24}><Eraser /></Tool>
              </ToolRow>
              <ToolRow>
                <Tool $w={22} $b $fs={13} $ml={-1}>B</Tool>
                <Tool $w={22} $i $fs={13}>I</Tool>
                <Tool $w={22} $u $fs={13}>U</Tool>
                <Tool $w={22} $b $fs={14} $shadow>S</Tool>
                <Tool $w={22} $fs={10.5} $strike>abc</Tool>
                <Tool $w={22} $fs={11} $stack>AV<KernArrow /></Tool><Caret $off />
                <Tool $w={31} $fs={14} $ml={2}>Aa</Tool><Caret $off />
                <VSep $ml={8} $m={5} />
                <Tool $w={20} $fs={15}>A</Tool><Caret $off $ml={4} />
              </ToolRow>
            </ToolCol>
          </GroupBody>
          <GroupFoot $mr={18}>Font<Launcher><LauncherIco c="#bbb" /></Launcher></GroupFoot>
        </Group>

        <Group $w={315}>
          <GroupBody $pl={8}>
            <ToolCol $w={161}>
              <ToolRow>
                <Tool $w={14}><Bullets /></Tool><Caret $off $ml={6} />
                <Tool $w={14} $ml={8}><Numbers /></Tool><Caret $off $ml={6} />
                <VSep $m={7} />
                <Tool $w={16}><Indent rev /></Tool>
                <Tool $w={16} $ml={6}><Indent /></Tool>
                <VSep $m={7} />
                <Tool $w={14}><LineSp /></Tool><Caret $off $ml={4} />
              </ToolRow>
              <ToolRow>
                <Tool $w={14}><Align t="l" /></Tool>
                <Tool $w={14} $ml={8}><Align t="c" /></Tool>
                <Tool $w={14} $ml={8}><Align t="r" /></Tool>
                <Tool $w={14} $ml={8}><Align t="j" /></Tool>
                <VSep $m={8} />
                <Tool $w={14}><Cols /></Tool><Caret $off $ml={5} />
              </ToolRow>
            </ToolCol>
            <SmallCol>
              <SmallBtn $off><IconSlot $w={16}><TextDir /></IconSlot>Text Direction<Caret $off /></SmallBtn>
              <SmallBtn $off><IconSlot $w={16}><AlignText /></IconSlot>Align Text<Caret $off /></SmallBtn>
              <SmallBtn $off><IconSlot $w={16}><Smart /></IconSlot>Convert to SmartArt<Caret $off /></SmallBtn>
            </SmallCol>
          </GroupBody>
          <GroupFoot $mr={17}>Paragraph<Launcher><LauncherIco c="#bbb" /></Launcher></GroupFoot>
        </Group>

        <Group $w={349}>
          <GroupBody $pl={5}>
            <Gallery>
              <GalleryGrid>
                {SHAPES.map(n => <GalleryCell key={n}><ShapeIco n={n} /></GalleryCell>)}
              </GalleryGrid>
              <GalleryBar>
                <GalleryStep $h={21} $off><UpTri /></GalleryStep>
                <GalleryStep $h={19}><Caret /></GalleryStep>
                <GalleryStep $h={21} $last><NavBar $w={7} $h={1} /><Caret /></GalleryStep>
              </GalleryBar>
            </Gallery>
            <BigBtn $w={42} $ml={6}>
              <BigIcon $pt={4}><ArrangeIco /></BigIcon>
              <BigLine>Arrange</BigLine>
              <BigLine><Caret /></BigLine>
            </BigBtn>
            <BigBtn $w={44} $off>
              <BigIcon $pt={5}><QuickIco /></BigIcon>
              <BigLine>Quick</BigLine>
              <BigLine>Styles<Caret $off /></BigLine>
            </BigBtn>
            <SmallCol $ml={4}>
              <SmallBtn $off $gap={3}><IconSlot $w={16}><FillIco /></IconSlot>Shape Fill<Caret $off /></SmallBtn>
              <SmallBtn $off $gap={3}><IconSlot $w={16}><OutlineIco /></IconSlot>Shape Outline<Caret $off /></SmallBtn>
              <SmallBtn $off $gap={3}><IconSlot $w={16}><EffectsIco /></IconSlot>Shape Effects<Caret $off /></SmallBtn>
            </SmallCol>
          </GroupBody>
          <GroupFoot $mr={16}>Drawing<Launcher><LauncherIco c="#bbb" /></Launcher></GroupFoot>
        </Group>

        <Group $w={92}>
          <GroupBody $pl={8}>
            <SmallCol>
              <SmallBtn $gap={4}><IconSlot $w={14}><FindIco /></IconSlot>Find</SmallBtn>
              <SmallBtn $gap={2}><ReplaceMark><Ra>ab</Ra><Rb>ac</Rb></ReplaceMark>Replace<Caret $ml={7} /></SmallBtn>
              <SmallBtn $gap={4}><IconSlot $w={14}><SelectIco /></IconSlot>Select<Caret /></SmallBtn>
            </SmallCol>
          </GroupBody>
          <GroupFoot>Editing</GroupFoot>
        </Group>

        <Collapse><ChevUp /></Collapse>
      </Ribbon>

      <Work>
        <Pane>
          {[1, 2, 3, 4, 5, 6].map(n => (
            <ThumbRow key={n}>
              <ThumbNum $sel={n === 2}>{n}</ThumbNum>
              <Thumb $sel={n === 2}>{n === 1 && <MiniThumb />}</Thumb>
            </ThumbRow>
          ))}
        </Pane>
        <VScroll>
          <ScrollBtn><Tri /></ScrollBtn>
          <ScrollBtn $thumb $h={60} />
          <ScrollBtn $auto $h={15} $mb={2}><Tri $down /></ScrollBtn>
        </VScroll>
        <Divider />
        <Editor>
          <EditorTop>
            <Canvas>
              <Slide>
                <Panel>
                  <PanelTitle>Create New Admin</PanelTitle>
                  <FieldRow>
                    <FieldLabel $dy={-1}>Username:</FieldLabel><FieldBox />
                  </FieldRow>
                  <FieldRow>
                    <FieldLabel>Full Name:</FieldLabel><FieldBox />
                  </FieldRow>
                  <FieldRow>
                    <FieldLabel $dy={2} $w={132}>Contact Info:</FieldLabel><FieldBox $ml={15} />
                  </FieldRow>
                  <FieldRow $h={24} $mb={10}>
                    <FieldLabel $dy={3} $w={132}>Role:</FieldLabel>
                    <SelectBox>
                      <SelectValue>Librarian</SelectValue>
                      <SelectDrop><Caret $off /></SelectDrop>
                    </SelectBox>
                  </FieldRow>
                  <FieldRow>
                    <FieldLabel $dy={2}>Set Password:</FieldLabel><FieldBox $ml={15} />
                  </FieldRow>
                  <CheckRow><CheckBox />Show Password</CheckRow>
                  <ButtonRow>
                    <Pill $pr={2}>Add</Pill>
                    <Pill $pr={4}>Cancel</Pill>
                  </ButtonRow>
                </Panel>
              </Slide>
            </Canvas>
            <RightBar>
              <ScrollBtn $h={14}><Tri /></ScrollBtn>
              <ScrollBtn $thumb $h={17} $mt={10} />
              <ScrollBtn $auto $h={14} $mb={4}><Tri $down /></ScrollBtn>
              <NavStep><Tri /><NavBar /></NavStep>
              <NavStep $mb={22}><NavBar /><Tri $down /></NavStep>
            </RightBar>
          </EditorTop>
          <BottomLine />
        </Editor>
      </Work>

      <Status>
        <StatusText>Slide 2 of 51</StatusText>
        <SpellIco />
        <StatusItem $ml={759}><NotesIco />Notes</StatusItem>
        <StatusItem $ml={19} $ls={-0.5}><CommentIco />Comments</StatusItem>
        <ViewBtn $on $ml={18}><NormalV /></ViewBtn>
        <ViewBtn><SorterV /></ViewBtn>
        <ViewBtn><ReadV /></ViewBtn>
        <ViewBtn><ShowV /></ViewBtn>
        <Zoom $ml={5}>
          <ZoomMinus />
          <ZoomTrack><ZoomThumb /><ZoomTick /></ZoomTrack>
          <ZoomPlus />
        </Zoom>
        <StatusItem $ml={15}>75%</StatusItem>
        <StatusItem $ml={14}><FitIco /></StatusItem>
      </Status>

      <Taskbar>
        <StartSlot><WinIco /></StartSlot>
        <Apps>
          {APPS.map(([I, run, on], i) => <AppSlot key={i} $run={run} $on={on}><I /></AppSlot>)}
        </Apps>
        <Tray>
          <TraySlot $w={24}><ChevTray /></TraySlot>
          <TraySlot $w={24}><Battery /></TraySlot>
          <TraySlot $w={25}><Network /></TraySlot>
          <TraySlot $w={24}><Speaker /></TraySlot>
          <Clock>11:52 PM</Clock>
          <TraySlot $w={48}><Notify /></TraySlot>
          <TrayEdge />
        </Tray>
      </Taskbar>
    </Page>
  );
}
